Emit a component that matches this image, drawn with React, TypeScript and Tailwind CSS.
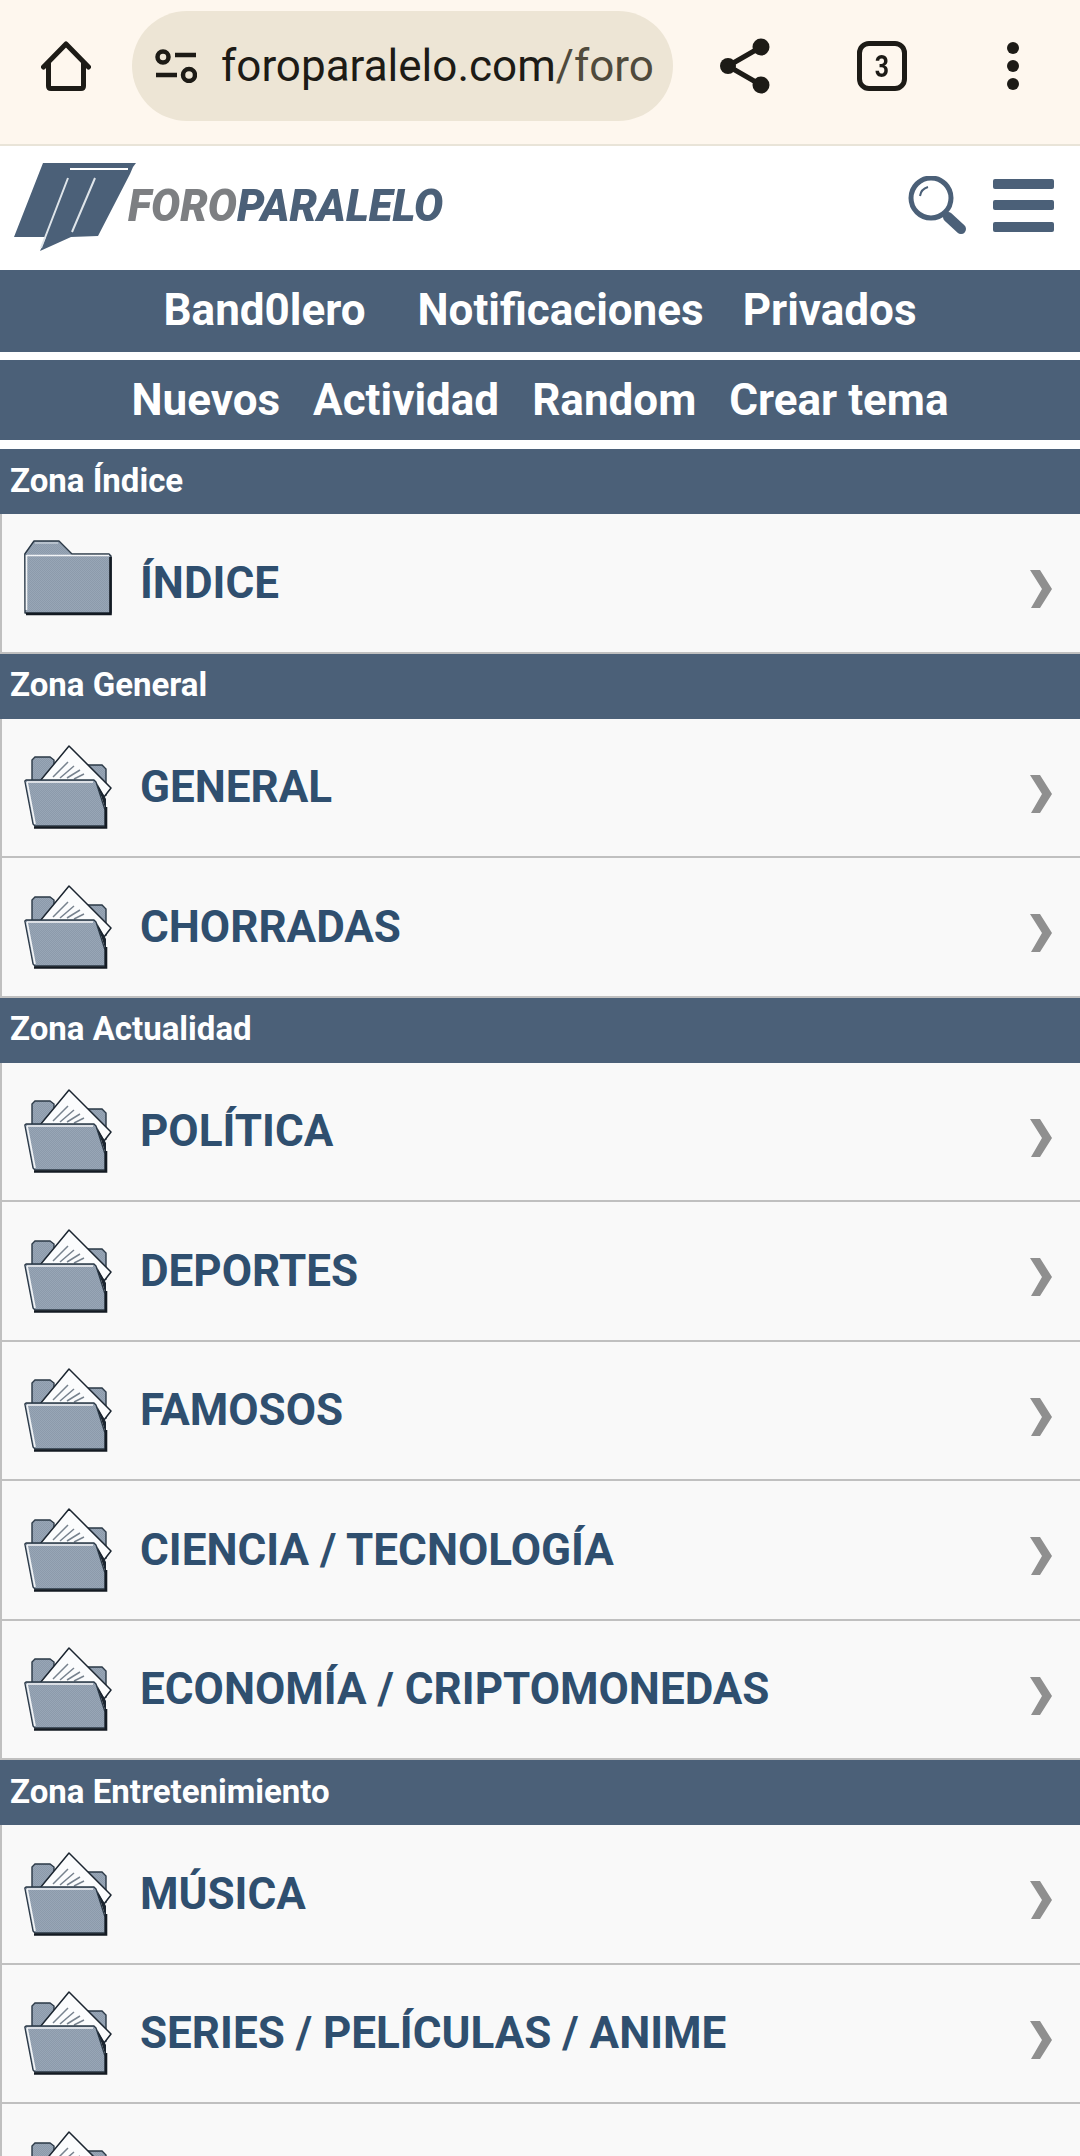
import { Fragment } from "react";

const zones = [
  { title: "Zona Índice", rows: ["ÍNDICE"], closed: true },
  { title: "Zona General", rows: ["GENERAL", "CHORRADAS"] },
  { title: "Zona Actualidad", rows: ["POLÍTICA", "DEPORTES", "FAMOSOS", "CIENCIA / TECNOLOGÍA", "ECONOMÍA / CRIPTOMONEDAS"] },
  { title: "Zona Entretenimiento", rows: ["MÚSICA", "SERIES / PELÍCULAS / ANIME", "VIDEO JUEGOS / CONSOLAS"] },
];

function Dither({ id }: { id: string }) {
  return (
    <defs>
      <pattern id={id} width="2" height="2" patternUnits="userSpaceOnUse">
        <rect width="2" height="2" fill="#98a6b6" />
        <rect width="1" height="1" fill="#8c9aab" />
        <rect x="1" y="1" width="1" height="1" fill="#8c9aab" />
      </pattern>
    </defs>
  );
}

function ClosedFolder() {
  return (
    <svg width="88" height="76" viewBox="0 0 88 76" className="shrink-0 mb-[10px]">
      <Dither id="ditherClosed" />
      <path d="M0.8 14 L10 1 L35 1 L48 14 L85 14 L87 16 L87 73 L1 73 Z" fill="url(#ditherClosed)" stroke="#2a3846" strokeWidth="1.4" strokeLinejoin="round" />
      <path d="M3 15.5 L85 15.5 M2.5 15 L2.5 70" stroke="#f2f4f6" strokeWidth="1.6" />
      <path d="M11 3 L34 3" stroke="#c7d0d9" strokeWidth="1.4" />
      <path d="M2 74 L86.5 74 L86.5 17" fill="none" stroke="#141b23" strokeWidth="2.6" />
    </svg>
  );
}

function OpenFolder() {
  return (
    <svg width="88" height="84" viewBox="0 0 88 84" className="shrink-0">
      <Dither id="ditherOpen" />
      <path d="M8 40 L8 15 L11 12 L26 12 L30 15 L30 40 Z" fill="url(#ditherOpen)" stroke="#2a3846" strokeWidth="1.4" />
      <path d="M62 20 L78 20 L82 24 L82 50 L62 50 Z" fill="url(#ditherOpen)" stroke="#2a3846" strokeWidth="1.4" />
      <path d="M16 36 L45 1 L87 43 L80 52 L70 36 Z" fill="#fbfcfd" stroke="#1b2530" strokeWidth="1.5" strokeLinejoin="round" />
      <path d="M29 32 L44 17 M36 33 L50 21 M43 33 L56 25 M50 34 L60 29" stroke="#77828e" strokeWidth="1.5" />
      <path d="M0.8 36 L2 35 L70 35 L72 37 L81 65 L81 81 L11 81 L9 79 Z" fill="url(#ditherOpen)" stroke="#2a3846" strokeWidth="1.3" strokeLinejoin="round" />
      <path d="M3 37 L69 37 M3 37 L11 79" stroke="#f2f4f6" strokeWidth="1.7" fill="none" />
      <path d="M10 82.5 L82 82.5 L82 62" fill="none" stroke="#141b23" strokeWidth="2.6" />
      <path d="M73 38 L82 54 L82 66 Z" fill="#1b2530" />
    </svg>
  );
}

function ForumRow({ label, closed }: { label: string; closed?: boolean }) {
  return (
    <div className="h-[139.5px] flex items-center bg-[#f9f9f9] border-l-2 border-b-2 border-[#c0c0c0]">
      <div className="w-[138px] pl-[22px] shrink-0 flex items-center">
        {closed ? <ClosedFolder /> : <OpenFolder />}
      </div>
      <div className="flex-1 text-[44px] font-bold text-[#2f4f6f] leading-none whitespace-nowrap">{label}</div>
      <svg width="22" height="38" viewBox="0 0 22 38" className="shrink-0 mr-[28px] mt-[13px]">
        <path d="M0 0 L10 0 L22 19 L10 38 L1 38 L12 19 Z" fill="#8f8f8f" />
      </svg>
    </div>
  );
}

export default function App() {
  return (
    <div className="w-[1080px] h-[2156px] overflow-hidden bg-white font-['Roboto',sans-serif]">
      {/* browser toolbar */}
      <div className="h-[146px] bg-[#fef7ee] border-b-2 border-[#e9e4d8] flex items-center pl-[41px] pb-[12px] text-[#1d1b16]">
        <svg width="50" height="50" viewBox="0 0 50 50" className="shrink-0" fill="none" stroke="#1d1b16" strokeWidth="5" strokeLinejoin="round">
          <path d="M2.5 26 L25 3 L47.5 26" strokeLinecap="round" />
          <path d="M7.5 21 L7.5 45 Q7.5 47.5 10 47.5 L40 47.5 Q42.5 47.5 42.5 45 L42.5 21" />
        </svg>
        <div className="ml-[41px] w-[541px] h-[110px] rounded-full bg-[#ede5d5] flex items-center pl-[23px] overflow-hidden shrink-0">
          <svg width="42" height="34" viewBox="0 0 42 34" className="shrink-0" fill="none" stroke="#1d1b16" strokeWidth="4.5">
            <circle cx="8" cy="8" r="5.5" />
            <path d="M20 6 L41 6 M1 26 L22 26" />
            <circle cx="34" cy="26" r="6" />
          </svg>
          <div className="ml-[24px] text-[44px] whitespace-nowrap text-[#1d1b16] font-normal">
            foroparalelo.com<span className="text-[#4f4a3c]">/foro</span>
          </div>
        </div>
        <svg width="50" height="56" viewBox="0 0 50 56" className="ml-[47px] shrink-0" fill="#1d1b16">
          <circle cx="8" cy="28" r="8" /><circle cx="41" cy="9" r="8.5" /><circle cx="41" cy="47" r="8.5" />
          <path d="M8 28 L41 9 M8 28 L41 47" stroke="#1d1b16" strokeWidth="5" />
        </svg>
        <div className="ml-[87px] w-[50px] h-[50px] rounded-[12px] border-[5px] border-[#1d1b16] flex items-center justify-center text-[31px] font-bold leading-none shrink-0">
          <span className="scale-x-[0.8]">3</span>
        </div>
        <div className="ml-[100px] flex flex-col gap-[6px] shrink-0">
          <div className="w-[12px] h-[12px] rounded-full bg-[#1d1b16]" />
          <div className="w-[12px] h-[12px] rounded-full bg-[#1d1b16]" />
          <div className="w-[12px] h-[12px] rounded-full bg-[#1d1b16]" />
        </div>
      </div>

      {/* site header */}
      <div className="h-[124px] flex items-center justify-between pl-[14px] pr-[26px] pb-[6px]">
        <div className="flex items-end mt-[4px]">
          <svg width="122" height="90" viewBox="0 0 122 90" className="shrink-0 blur-[0.4px]">
            <path d="M29 1 L122 1 L119 5 L116 12 L84 74 L57 75 L26 89 L32 75 L0 75 Z" fill="#4b6078" />
            <path d="M56 7 L114 7" stroke="#fff" strokeWidth="2" />
            <path d="M54 16 L27 86 M81 16 L58 70" stroke="#dfe5ea" strokeWidth="2" />
          </svg>
          <div className="ml-[-8px] mb-[30px] text-[44px] leading-[32px] font-black italic whitespace-nowrap scale-x-[0.99] origin-left w-[300px] text-[#4b6078] blur-[0.5px]">
            <span className="text-[#7d7f82]">FORO</span>PARALELO
          </div>
        </div>
        <div className="flex items-center gap-[27px]">
          <svg width="58" height="58" viewBox="0 0 58 58" fill="none" className="shrink-0">
            <circle cx="23" cy="22" r="20" stroke="#4b6078" strokeWidth="5" />
            <path d="M12 20 Q13 13 20 11" stroke="#4b6078" strokeWidth="2" />
            <path d="M40 41 L53 53" stroke="#4b6078" strokeWidth="10" strokeLinecap="round" />
          </svg>
          <div className="flex flex-col gap-[11.5px]">
            <div className="w-[61px] h-[10px] rounded-[2px] bg-[#4b6078]" />
            <div className="w-[61px] h-[10px] rounded-[2px] bg-[#4b6078]" />
            <div className="w-[61px] h-[10px] rounded-[2px] bg-[#4b6078]" />
          </div>
        </div>
      </div>

      {/* nav bars */}
      <div className="h-[82px] bg-[#4b6078] flex items-center justify-center pb-[2px] text-white text-[44px] font-bold">
        <span>Band0lero</span>
        <span className="ml-[52px]">Notificaciones</span>
        <span className="ml-[39px]">Privados</span>
      </div>
      <div className="h-[80px] mt-[8px] bg-[#4b6078] flex items-center justify-center gap-[33px] text-white text-[44px] font-bold">
        <span>Nuevos</span>
        <span>Actividad</span>
        <span>Random</span>
        <span>Crear tema</span>
      </div>

      <div className="mt-[9px]">
        {zones.map((zone) => (
          <Fragment key={zone.title}>
            <div className="h-[65px] bg-[#4b6078] flex items-center pl-[10px] pb-[2px] text-white text-[33px] font-bold">{zone.title}</div>
            {zone.rows.map((row) => (
              <ForumRow key={row} label={row} closed={zone.closed} />
            ))}
          </Fragment>
        ))}
      </div>
    </div>
  );
}
